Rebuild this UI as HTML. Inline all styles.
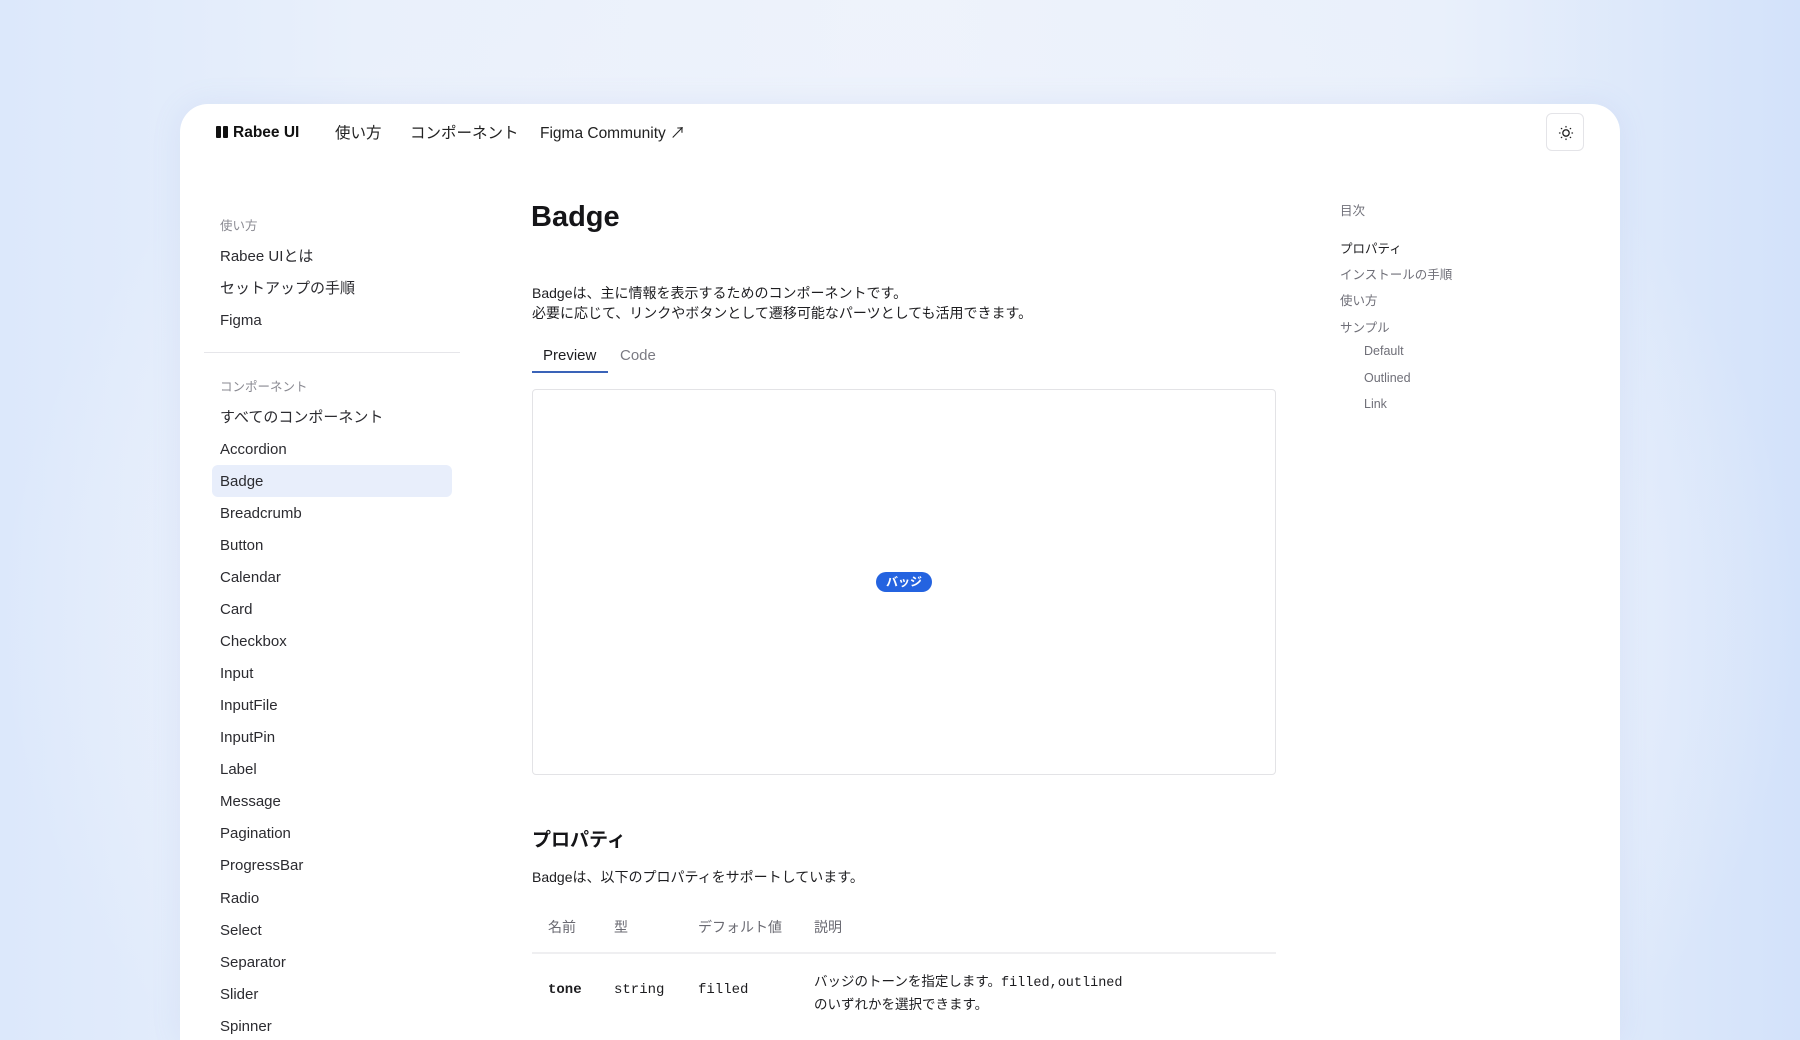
<!DOCTYPE html>
<html><head><meta charset="utf-8"><style>
*{margin:0;padding:0;box-sizing:border-box}
html,body{width:1800px;height:1040px;overflow:hidden}
body{font-family:"Liberation Sans","Noto Sans CJK JP",sans-serif;color:#1d1d20;position:relative;
background:radial-gradient(ellipse 900px 700px at 900px 620px,#ffffff 0%,#edf2fc 55%,rgba(237,242,252,0) 100%),linear-gradient(90deg,#dce8fb 0%,#e9f0fb 20%,#eef3fb 50%,#e9f0fb 80%,#d3e2fa 100%);}
.card{position:absolute;left:180px;top:104px;width:1440px;height:936px;background:#fff;border-radius:28px 28px 0 0;box-shadow:0 0 30px rgba(120,150,210,.12)}
.a{position:absolute;white-space:nowrap}
.nav{top:121px;font-size:15.5px;color:#222}
.side{font-size:15px;color:#2b2b30;left:220px;line-height:20px}
.lbl{font-size:12.5px;color:#8a8a92;left:220px}
.toc{font-size:12.5px;color:#6f6f78}
.mono{font-family:"Liberation Mono",monospace}
</style></head><body>
<div class="card"></div>
<div class="a nav" style="left:216px;top:124px;font-weight:700;color:#111"><span style="display:inline-block;width:5px;height:12px;background:#111;border-radius:1px;margin-right:2px;vertical-align:-1px"></span><span style="display:inline-block;width:5px;height:12px;background:#111;border-radius:1px;margin-right:5px;vertical-align:-1px"></span>Rabee UI</div>
<div class="a nav" style="left:335px">使い方</div>
<div class="a nav" style="left:410px">コンポーネント</div>
<div class="a nav" style="left:540px">Figma Community ↗</div>
<div class="a" style="left:1546px;top:113px;width:38px;height:38px;border:1px solid #e4e4e8;border-radius:6px">
<svg width="38" height="38" viewBox="0 0 38 38"><circle cx="19" cy="19" r="3.2" fill="none" stroke="#222" stroke-width="1.3"/><g stroke="#222" stroke-width="1.3" stroke-linecap="round"><path d="M19 12.5v.5M19 25v.5M12.5 19h.5M25 19h.5M14.4 14.4l.3.3M23.3 23.3l.3.3M14.4 23.6l.3-.3M23.3 14.7l.3-.3"/></g></svg></div>

<div class="a lbl" style="top:215px">使い方</div>
<div class="a side" style="top:247px">Rabee UIとは</div>
<div class="a side" style="top:279px">セットアップの手順</div>
<div class="a side" style="top:311px">Figma</div>
<div class="a" style="left:204px;top:352px;width:256px;height:1px;background:#e6e6ea"></div>
<div class="a lbl" style="top:376px">コンポーネント</div>
<div class="a" style="left:212px;top:465px;width:240px;height:32px;background:#e8eefb;border-radius:6px"></div>
<div class="a side" style="top:408px">すべてのコンポーネント</div>
<div class="a side" style="top:440px">Accordion</div>
<div class="a side" style="top:472px">Badge</div>
<div class="a side" style="top:504px">Breadcrumb</div>
<div class="a side" style="top:536px">Button</div>
<div class="a side" style="top:568px">Calendar</div>
<div class="a side" style="top:600px">Card</div>
<div class="a side" style="top:632px">Checkbox</div>
<div class="a side" style="top:664px">Input</div>
<div class="a side" style="top:696px">InputFile</div>
<div class="a side" style="top:728px">InputPin</div>
<div class="a side" style="top:760px">Label</div>
<div class="a side" style="top:792px">Message</div>
<div class="a side" style="top:824px">Pagination</div>
<div class="a side" style="top:856px">ProgressBar</div>
<div class="a side" style="top:889px">Radio</div>
<div class="a side" style="top:921px">Select</div>
<div class="a side" style="top:953px">Separator</div>
<div class="a side" style="top:985px">Slider</div>
<div class="a side" style="top:1017px">Spinner</div>

<div class="a" style="left:531px;top:201px;font-size:29px;font-weight:700;color:#151518">Badge</div>
<div class="a" style="left:532px;top:284px;font-size:14px;line-height:19.5px;color:#1d1d20">Badgeは、主に情報を表示するためのコンポーネントです。<br>必要に応じて、リンクやボタンとして遷移可能なパーツとしても活用できます。</div>
<div class="a" style="left:543px;top:347px;font-size:15px;color:#1d1d20">Preview</div>
<div class="a" style="left:620px;top:347px;font-size:15px;color:#7a7a82">Code</div>
<div class="a" style="left:532px;top:371px;width:76px;height:2px;background:#3a63b8"></div>
<div class="a" style="left:532px;top:389px;width:744px;height:386px;border:1px solid #e3e3e6;border-radius:4px"></div>
<div class="a" style="left:876px;top:572px;width:56px;height:20px;background:#2463e0;border-radius:10px;color:#fff;font-size:12px;font-weight:700;text-align:center;line-height:20px">バッジ</div>

<div class="a" style="left:532px;top:825px;font-size:19px;font-weight:700;color:#151518">プロパティ</div>
<div class="a" style="left:532px;top:867px;font-size:14px">Badgeは、以下のプロパティをサポートしています。</div>
<div class="a" style="left:548px;top:917px;font-size:14px;color:#6a6a72">名前</div>
<div class="a" style="left:614px;top:917px;font-size:14px;color:#6a6a72">型</div>
<div class="a" style="left:698px;top:917px;font-size:14px;color:#6a6a72">デフォルト値</div>
<div class="a" style="left:814px;top:917px;font-size:14px;color:#6a6a72">説明</div>
<div class="a" style="left:532px;top:952px;width:744px;height:2px;background:#efeff1"></div>
<div class="a mono" style="left:548px;top:982px;font-size:14px;font-weight:700">tone</div>
<div class="a mono" style="left:614px;top:982px;font-size:14px">string</div>
<div class="a mono" style="left:698px;top:982px;font-size:14px">filled</div>
<div class="a" style="left:814px;top:971px;font-size:13.5px;line-height:21px">バッジのトーンを指定します。<span class="mono">filled,outlined</span><br>のいずれかを選択できます。</div>

<div class="a toc" style="left:1340px;top:200px">目次</div>
<div class="a toc" style="left:1340px;top:238px;color:#1d1d20">プロパティ</div>
<div class="a toc" style="left:1340px;top:264px">インストールの手順</div>
<div class="a toc" style="left:1340px;top:290px">使い方</div>
<div class="a toc" style="left:1340px;top:317px">サンプル</div>
<div class="a toc" style="left:1364px;top:344px">Default</div>
<div class="a toc" style="left:1364px;top:371px">Outlined</div>
<div class="a toc" style="left:1364px;top:397px">Link</div>
</body></html>
